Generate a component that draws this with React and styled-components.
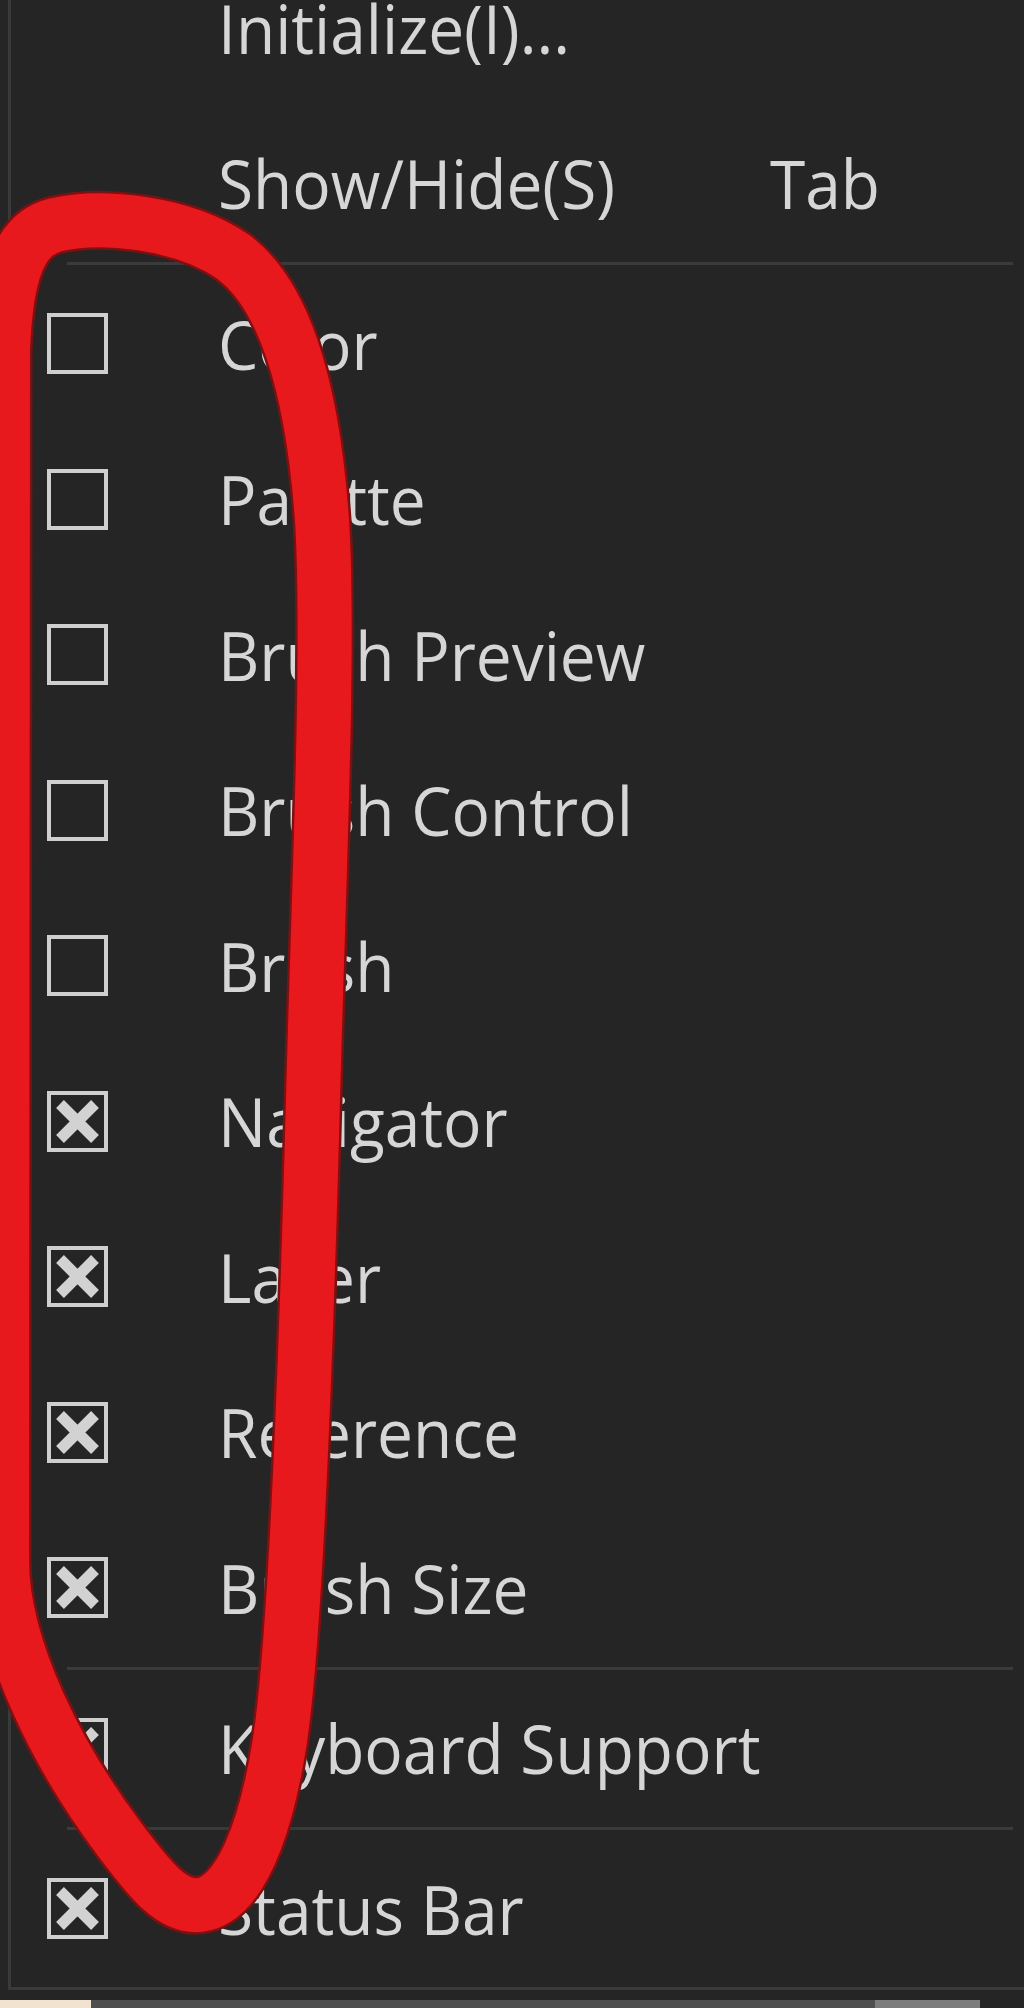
import styled, { createGlobalStyle } from "styled-components"

const GlobalStyle = createGlobalStyle`
  html, body {
    margin: 0;
    padding: 0;
    background: #252525;
  }
  body {
    font-family: "Open Sans", "Noto Sans", sans-serif;
  }
`

const panels = [
  { label: "Color", checked: false },
  { label: "Palette", checked: false },
  { label: "Brush Preview", checked: false },
  { label: "Brush Control", checked: false },
  { label: "Brush", checked: false },
  { label: "Navigator", checked: true },
  { label: "Layer", checked: true },
  { label: "Reference", checked: true },
  { label: "Brush Size", checked: true },
]

// hand drawn loop on top of the screenshot
const loop =
  "M3 350 L2 1560 C2 1650 60 1760 120 1840 C150 1880 172 1908 200 1905 C240 1900 266 1830 280 1740 C295 1640 305 1400 313 1100 C318 900 330 650 322 520 C312 380 282 292 232 256 C182 222 100 214 55 225 C20 234 6 272 3 350 Z"

function CheckBox({ checked }) {
  return (
    <Box>
      {checked && (
        <svg width="53" height="53" viewBox="0 0 53 53">
          <path d="M9 9 L44 44 M44 9 L9 44" stroke="#d2d2d2" strokeWidth="11" />
        </svg>
      )}
    </Box>
  )
}

function MenuItem({ label, shortcut, check }) {
  return (
    <Row>
      {check !== undefined ? <CheckBox checked={check} /> : <span />}
      <Label>{label}</Label>
      {shortcut && <Label>{shortcut}</Label>}
    </Row>
  )
}

function App() {
  return (
    <Screen>
      <GlobalStyle />
      <Menu>
        <MenuItem label="Initialize(I)..." />
        <MenuItem label="Show/Hide(S)" shortcut="Tab" />
        <Separator />
        {panels.map((p) => (
          <MenuItem key={p.label} label={p.label} check={p.checked} />
        ))}
        <Separator />
        <MenuItem label="Keyboard Support" check={true} />
        <Separator />
        <MenuItem label="Status Bar" check={true} />
      </Menu>
      <TaskStrip>
        <StripPart $w="91px" $c="#f2e2d0" />
        <StripPart $w="784px" $c="#4e4e4e" />
        <StripPart $w="105px" $c="#7c7c7c" />
        <StripPart $w="44px" $c="#252525" />
      </TaskStrip>
      <Scribble viewBox="0 0 1024 2008" width="1024" height="2008">
        <path d={loop} fill="none" stroke="#7d1012" strokeWidth="59" strokeLinejoin="round" />
        <path d={loop} fill="none" stroke="#e8191c" strokeWidth="54" strokeLinejoin="round" />
      </Scribble>
    </Screen>
  )
}

export default App

const Screen = styled.div`
  position: relative;
  width: 1024px;
  height: 2008px;
  overflow: hidden;
  background: #252525;
  display: flex;
  flex-direction: column;
`
const Menu = styled.div`
  margin-top: -50px;
  margin-left: 8px;
  border-left: 3px solid #3a3a3a;
  border-bottom: 3px solid #3a3a3a;
  display: flex;
  flex-direction: column;
`
const Row = styled.div`
  height: 155.5px;
  flex: none;
  display: grid;
  grid-template-columns: 61px 442px auto;
  column-gap: 110px;
  align-items: center;
  padding-left: 36px;
`
const Label = styled.span`
  font-size: 64px;
  line-height: 1;
  color: #d6d6d6;
  white-space: nowrap;
  transform: scaleY(1.07);
`
const Box = styled.span`
  width: 61px;
  height: 61px;
  box-sizing: border-box;
  border: 4px solid #cfcfcf;
  display: grid;
  place-items: center;
`
const Separator = styled.div`
  height: 3px;
  flex: none;
  background: #3a3a3a;
  margin: 1px 11px 1px 56px;
`
const TaskStrip = styled.div`
  margin-top: 10px;
  height: 9px;
  display: flex;
`
const StripPart = styled.div`
  width: ${(p) => p.$w};
  background: ${(p) => p.$c};
`
const Scribble = styled.svg`
  position: absolute;
  top: 0;
  left: 0;
  pointer-events: none;
`
